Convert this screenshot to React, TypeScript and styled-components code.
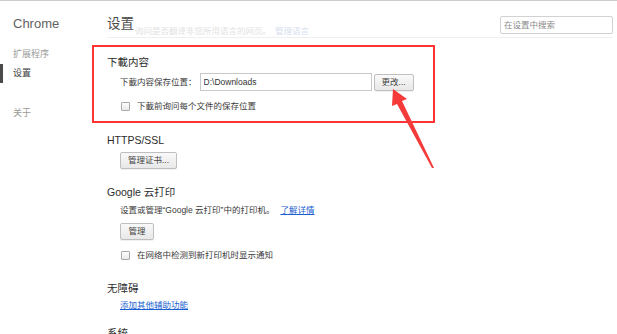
import React from 'react';
import styled, { createGlobalStyle } from 'styled-components';

const GlobalStyle = createGlobalStyle`
  html, body { margin: 0; padding: 0; background: #fff; }
  body {
    font-family: "Liberation Sans", "Noto Sans CJK SC", sans-serif;
    color: #333;
    overflow: hidden;
  }
`;

const Page = styled.div`
  position: relative;
  display: flex;
  height: 333px;
  border-top: 1px solid #cdcdcd;
  overflow: hidden;
`;

const Sidebar = styled.nav`
  width: 92px;
  flex: none;
  padding-top: 15px;
  box-sizing: border-box;
`;

const Brand = styled.div`
  font-size: 13px;
  line-height: 16px;
  color: #5f5f5f;
  padding-left: 13px;
  margin-bottom: 13px;
`;

const NavItem = styled.div<{ $active?: boolean; $gap?: number }>`
  height: 19px;
  line-height: 19px;
  font-size: 9px;
  padding-left: ${(p) => (p.$active ? 10 : 13)}px;
  color: ${(p) => (p.$active ? '#3c3c3c' : '#9a9a9a')};
  border-left: ${(p) => (p.$active ? '3px solid #4a4a4a' : 'none')};
  margin-top: ${(p) => p.$gap ?? 0}px;
`;

const Main = styled.main`
  flex: 1;
  padding: 0 4px 0 15px;
  display: flex;
  flex-direction: column;
  min-width: 0;
`;

const Header = styled.header`
  display: flex;
  align-items: flex-start;
  height: 38px;
  box-sizing: border-box;
  padding-top: 13px;
  border-bottom: 1px solid #efefef;
`;

const Title = styled.h1`
  margin: 0;
  font-size: 13.5px;
  line-height: 20px;
  font-weight: normal;
  color: #4a4a4a;
`;

const Faded = styled.div`
  margin: 11px 0 0 1px;
  font-size: 8.5px;
  line-height: 12px;
  color: #e2e2e2;
  white-space: nowrap;
  span { color: #d5deee; margin-left: 4px; }
`;

const Search = styled.input`
  margin: 2px 0 0 auto;
  width: 113px;
  height: 18px;
  box-sizing: border-box;
  border: 1px solid #d2d2d2;
  border-radius: 2px;
  padding: 0 3px;
  font: 8.5px "Liberation Sans", "Noto Sans CJK SC", sans-serif;
  color: #333;
  outline: none;
  &::placeholder { color: #8a8a8a; }
`;

const Content = styled.div`
  padding-top: 7px;
  display: flex;
  flex-direction: column;
  align-items: flex-start;
`;

const Highlight = styled.section`
  margin-left: -15px;
  width: 343px;
  box-sizing: border-box;
  border: 2px solid #ff3434;
  padding: 8px 0 8px 13px;
`;

const Section = styled.section<{ $top: number }>`
  margin-top: ${(p) => p.$top}px;
  display: flex;
  flex-direction: column;
  align-items: flex-start;
`;

const Heading = styled.h3`
  margin: 0;
  font-size: 10.5px;
  line-height: 14px;
  font-weight: normal;
  color: #2c2c2c;
`;

const Row = styled.div<{ $top: number }>`
  display: flex;
  align-items: center;
  margin: ${(p) => p.$top}px 0 0 13px;
  font-size: 8.5px;
  color: #3a3a3a;
  line-height: 13px;
  white-space: nowrap;
`;

const PathInput = styled.input`
  margin-left: 3px;
  width: 172px;
  height: 18px;
  box-sizing: border-box;
  border: 1px solid #c9c9c9;
  padding: 0 3px;
  font: 8.5px "Liberation Sans", "Noto Sans CJK SC", sans-serif;
  color: #333;
  outline: none;
`;

const Button = styled.button<{ $top?: number; $left?: number }>`
  margin: ${(p) => p.$top ?? 0}px 0 0 ${(p) => p.$left ?? 0}px;
  height: 17px;
  min-width: 34px;
  box-sizing: border-box;
  padding: 0 7px;
  border: 1px solid #bfbfbf;
  border-radius: 2px;
  background: linear-gradient(#f9f9f9, #e8e8e8);
  box-shadow: 0 1px 0 rgba(0, 0, 0, 0.06);
  font: 8.5px "Liberation Sans", "Noto Sans CJK SC", sans-serif;
  color: #444;
  line-height: 15px;
`;

const Box = styled.span`
  width: 9px;
  height: 9px;
  box-sizing: border-box;
  border: 1px solid #a9a9a9;
  border-radius: 1px;
  background: linear-gradient(#fdfdfd, #e9e9e9);
  margin: 0 7px 0 1px;
  flex: none;
`;

const Link = styled.a<{ $left?: number }>`
  color: #1a5fd0;
  text-decoration: underline;
  margin-left: ${(p) => p.$left ?? 6}px;
  cursor: pointer;
`;

const Arrow = styled.svg`
  position: absolute;
  left: 0;
  top: -1px;
  pointer-events: none;
`;

export default function App() {
  return (
    <>
      <GlobalStyle />
      <Page>
        <Sidebar>
          <Brand>Chrome</Brand>
          <NavItem>扩展程序</NavItem>
          <NavItem $active>设置</NavItem>
          <NavItem $gap={21}>关于</NavItem>
        </Sidebar>
        <Main>
          <Header>
            <Title>设置</Title>
            <Faded>
              询问是否翻译非您所用语言的网页。<span>管理语言</span>
            </Faded>
            <Search placeholder="在设置中搜索" />
          </Header>
          <Content>
            <Highlight>
              <Heading>下載内容</Heading>
              <Row $top={4}>
                下載内容保存位置：
                <PathInput defaultValue="D:\Downloads" />
                <Button $left={2}>更改...</Button>
              </Row>
              <Row $top={9}>
                <Box />
                下載前询问每个文件的保存位置
              </Row>
            </Highlight>
            <Section $top={10}>
              <Heading>HTTPS/SSL</Heading>
              <Button $top={5} $left={13}>管理证书...</Button>
            </Section>
            <Section $top={16}>
              <Heading>Google 云打印</Heading>
              <Row $top={5}>
                设置或管理“Google 云打印”中的打印机。
                <Link>了解详情</Link>
              </Row>
              <Button $top={6} $left={13}>管理</Button>
              <Row $top={9}>
                <Box />
                在网络中检测到新打印机时显示通知
              </Row>
            </Section>
            <Section $top={19}>
              <Heading>无障碍</Heading>
              <Row $top={4}>
                <Link $left={0}>添加其他辅助功能</Link>
              </Row>
            </Section>
            <Section $top={14}>
              <Heading>系统</Heading>
            </Section>
          </Content>
        </Main>
        <Arrow width="617" height="334" viewBox="0 0 617 334">
          <polygon
            points="393,89 407,99 402,101 434,168 432,168 397,104 392,106"
            fill="#f53a3a"
          />
        </Arrow>
      </Page>
    </>
  );
}
